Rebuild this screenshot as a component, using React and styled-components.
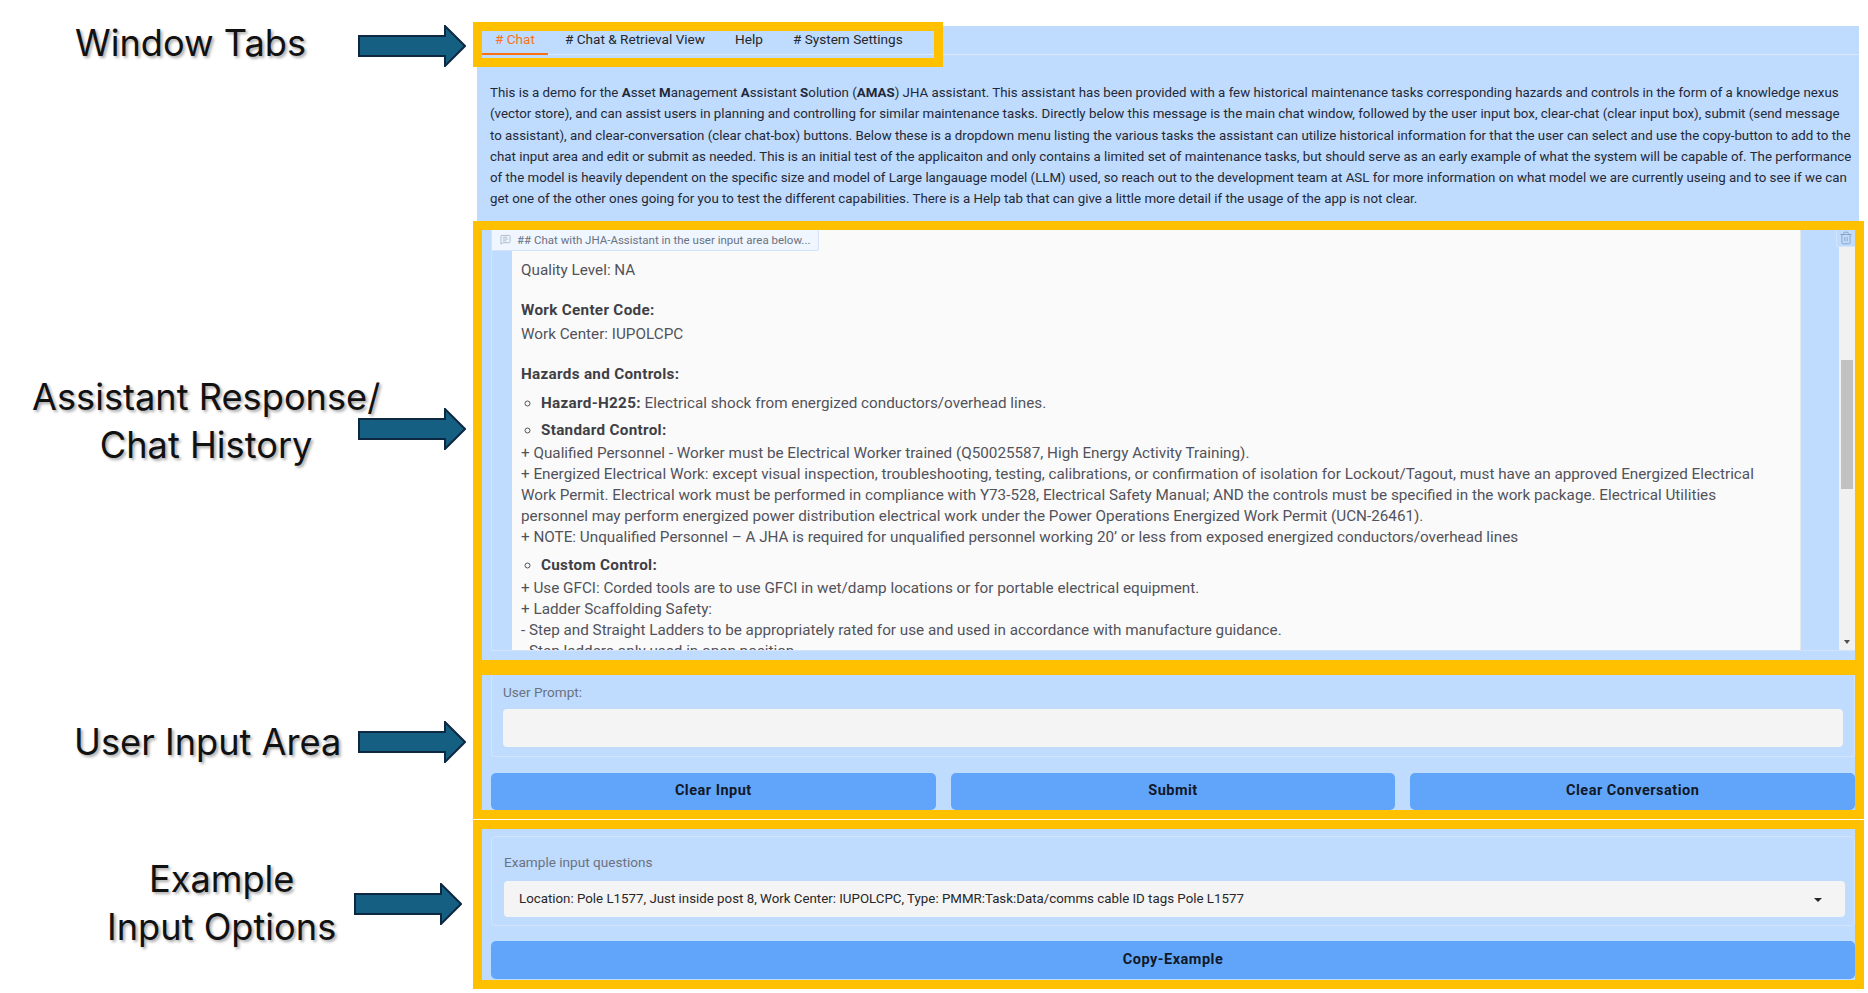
import { MessageSquareText, Trash2 } from "lucide-react";
import styled, { createGlobalStyle } from "styled-components";

const APP_FONT = `Roboto, "Noto Sans", sans-serif`;

const GlobalStyle = createGlobalStyle`
  html, body {
    margin: 0;
    background: #ffffff;
  }
  * {
    box-sizing: border-box;
  }
`;

const TABS = ["# Chat", "# Chat & Retrieval View", "Help", "# System Settings"];

const INTRO_LINES = [
  <>
    This is a demo for the <b>A</b>sset <b>M</b>anagement <b>A</b>ssistant <b>S</b>olution (<b>AMAS</b>) JHA assistant. This assistant has been provided with a few historical maintenance tasks corresponding hazards and controls in the form of a knowledge nexus
  </>,
  "(vector store), and can assist users in planning and controlling for similar maintenance tasks. Directly below this message is the main chat window, followed by the user input box, clear-chat (clear input box), submit (send message",
  "to assistant), and clear-conversation (clear chat-box) buttons. Below these is a dropdown menu listing the various tasks the assistant can utilize historical information for that the user can select and use the copy-button to add to the",
  "chat input area and edit or submit as needed. This is an initial test of the applicaiton and only contains a limited set of maintenance tasks, but should serve as an early example of what the system will be capable of. The performance",
  "of the model is heavily dependent on the specific size and model of Large langauage model (LLM) used, so reach out to the development team at ASL for more information on what model we are currently useing and to see if we can",
  "get one of the other ones going for you to test the different capabilities. There is a Help tab that can give a little more detail if the usage of the app is not clear.",
];

const STANDARD_LINES = [
  "+ Qualified Personnel - Worker must be Electrical Worker trained (Q50025587, High Energy Activity Training).",
  "+ Energized Electrical Work: except visual inspection, troubleshooting, testing, calibrations, or confirmation of isolation for Lockout/Tagout, must have an approved Energized Electrical",
  "Work Permit. Electrical work must be performed in compliance with Y73-528, Electrical Safety Manual; AND the controls must be specified in the work package. Electrical Utilities",
  "personnel may perform energized power distribution electrical work under the Power Operations Energized Work Permit (UCN-26461).",
  "+ NOTE: Unqualified Personnel – A JHA is required for unqualified personnel working 20’ or less from exposed energized conductors/overhead lines",
];

const CUSTOM_LINES = [
  "+ Use GFCI: Corded tools are to use GFCI in wet/damp locations or for portable electrical equipment.",
  "+ Ladder Scaffolding Safety:",
  "- Step and Straight Ladders to be appropriately rated for use and used in accordance with manufacture guidance.",
  "- Step ladders only used in open position.",
];

const Annotation = ({ left, labelTop, arrowTop, arrowRight = 7, children }) => (
  <AnnotationRow $arrowRight={arrowRight}>
    <AnnotationLabel $left={left} $top={labelTop}>
      {children}
    </AnnotationLabel>
    <ArrowSvg $top={arrowTop} width="108" height="42" viewBox="0 0 108 42">
      <path
        d="M1 11 H87 V1 L107 21 L87 41 V31 H1 Z"
        fill="#156082"
        stroke="#0e2841"
        strokeWidth="2"
      />
    </ArrowSvg>
  </AnnotationRow>
);

const App = () => (
  <>
    <GlobalStyle />
    <Page>
      <Annotation left={75} labelTop={-3} arrowTop={3}>
        Window Tabs
      </Annotation>
      <IntroColumn>
        <Panel>
          <TabBar>
            {TABS.map((tab, i) => (
              <Tab key={tab} $active={i === 0}>
                {tab}
              </Tab>
            ))}
          </TabBar>
          <Intro>
            {INTRO_LINES.map((line, i) => (
              <IntroLine key={i}>{line}</IntroLine>
            ))}
          </Intro>
        </Panel>
        <TabsHighlight />
      </IntroColumn>

      <Annotation left={32} labelTop={152} arrowTop={187}>
        <CenteredLine>Assistant Response/</CenteredLine>
        <CenteredLine>Chat History</CenteredLine>
      </Annotation>
      <ChatSection>
        <ChatBlock>
          <ChatChip>
            <MessageSquareText size={11} strokeWidth={1.5} color="#94a3b8" />
            ## Chat with JHA-Assistant in the user input area below...
          </ChatChip>
          <TrashChip>
            <Trash2 size={14} strokeWidth={1.25} color="#7f93ad" />
          </TrashChip>
          <Bubble>
            <Para>Quality Level: NA</Para>
            <Para>
              <b>Work Center Code:</b>
              <br />
              Work Center: IUPOLCPC
            </Para>
            <Para>
              <b>Hazards and Controls:</b>
            </Para>
            <BulletList>
              <li>
                <b>Hazard-H225:</b> Electrical shock from energized conductors/overhead lines.
              </li>
            </BulletList>
            <BulletList>
              <li>
                <b>Standard Control:</b>
              </li>
            </BulletList>
            <LineGroup>
              {STANDARD_LINES.map((line) => (
                <div key={line}>{line}</div>
              ))}
            </LineGroup>
            <BulletList>
              <li>
                <b>Custom Control:</b>
              </li>
            </BulletList>
            <LineGroup>
              {CUSTOM_LINES.map((line) => (
                <div key={line}>{line}</div>
              ))}
            </LineGroup>
          </Bubble>
          <ScrollTrack>
            <ScrollThumb />
            <ScrollArrow />
          </ScrollTrack>
        </ChatBlock>
      </ChatSection>

      <Annotation left={74} labelTop={52} arrowTop={55}>
        User Input Area
      </Annotation>
      <InputSection>
        <PromptBox>
          <FieldLabel>User Prompt:</FieldLabel>
          <PromptInput />
        </PromptBox>
        <ButtonRow>
          <ActionButton>Clear Input</ActionButton>
          <ActionButton>Submit</ActionButton>
          <ActionButton>Clear Conversation</ActionButton>
        </ButtonRow>
      </InputSection>

      <Annotation left={107} labelTop={36} arrowTop={64} arrowRight={11}>
        <CenteredLine>Example</CenteredLine>
        <CenteredLine>Input Options</CenteredLine>
      </Annotation>
      <ExampleSection>
        <ExampleBox>
          <FieldLabel>Example input questions</FieldLabel>
          <SelectBox>
            Location: Pole L1577, Just inside post 8, Work Center: IUPOLCPC, Type: PMMR:Task:Data/comms cable ID tags Pole L1577
            <SelectCaret />
          </SelectBox>
        </ExampleBox>
        <CopyButton>Copy-Example</CopyButton>
      </ExampleSection>
    </Page>
  </>
);

const Page = styled.div`
  display: grid;
  grid-template-columns: 473px 1391px;
  grid-template-rows: 199px 445px 153px 170px;
  width: 1868px;
  height: 993px;
  padding-top: 22px;
  overflow: hidden;
  font-family: ${APP_FONT};
`;

const AnnotationRow = styled.div`
  display: flex;
  align-items: flex-start;
  justify-content: space-between;
  padding-right: ${({ $arrowRight }) => $arrowRight}px;
`;

const AnnotationLabel = styled.div`
  flex: none;
  margin-top: ${({ $top }) => $top}px;
  margin-left: ${({ $left }) => $left}px;
  margin-right: -120px;
  font-family: Inter, Roboto, sans-serif;
  font-size: 36.2px;
  line-height: 48px;
  color: #111111;
  text-shadow: 2px 2px 3px rgba(0, 0, 0, 0.35);
  white-space: nowrap;
`;

const CenteredLine = styled.div`
  text-align: center;
`;

const ArrowSvg = styled.svg`
  display: block;
  flex: none;
  margin-top: ${({ $top }) => $top}px;
`;

const IntroColumn = styled.div`
  position: relative;
  padding: 4px 5px 0 4px;
`;

const Panel = styled.div`
  height: 195px;
  background: #bfdbfe;
`;

const TabBar = styled.div`
  display: flex;
  gap: 4px;
  height: 29px;
  padding-left: 5px;
  border-bottom: 1px solid #dbe8fb;
`;

const Tab = styled.div`
  height: 29px;
  padding: 0 13px;
  font-size: 13.6px;
  line-height: 27px;
  color: ${({ $active }) => ($active ? "#f97316" : "#27272a")};
  border-bottom: ${({ $active }) => ($active ? "2px solid #f97316" : "none")};
`;

const Intro = styled.div`
  padding: 27px 0 0 13px;
  font-size: 13.3px;
  line-height: 21.3px;
  color: #1f2937;
`;

const IntroLine = styled.div`
  white-space: nowrap;
  b {
    font-weight: 700;
  }
`;

const TabsHighlight = styled.div`
  position: absolute;
  top: 0;
  left: 0;
  width: 470px;
  height: 45px;
  border: 9px solid #ffc000;
  pointer-events: none;
`;

const ChatSection = styled.section`
  border: 9px solid #ffc000;
  border-bottom-width: 6px;
  background: #bfdbfe;
  padding: 0 0 9px 9px;
`;

const ChatBlock = styled.div`
  position: relative;
  display: flex;
  justify-content: space-between;
  height: 421px;
  padding-left: 20px;
  border-left: 1px solid #d3e3fa;
  border-bottom: 1px solid #d3e3fa;
`;

const ChatChip = styled.div`
  position: absolute;
  top: 0;
  left: 0;
  display: flex;
  align-items: center;
  gap: 6px;
  height: 21px;
  width: 327px;
  padding: 0 0 1px 8px;
  font-size: 11.5px;
  color: #6b7280;
  background: #eff6ff;
  border-right: 1px solid #d3e3fa;
  border-bottom: 1px solid #d3e3fa;
  border-radius: 0 0 3px 0;
`;

const TrashChip = styled.div`
  position: absolute;
  top: 0;
  right: 0;
  display: flex;
  align-items: center;
  justify-content: center;
  width: 19px;
  height: 17px;
  background: #bfdbfe;
  border-left: 1px solid #d3e3fa;
  border-bottom: 1px solid #d3e3fa;
`;

const Bubble = styled.div`
  width: 1289px;
  height: 100%;
  padding: 28px 0 0 9px;
  overflow: hidden;
  font-size: 15.25px;
  line-height: 21px;
  color: #52525b;
  background: #fafafa;
  border-right: 1px solid #e5e7eb;

  b {
    font-weight: 700;
    letter-spacing: 0.3px;
    color: #3f3f46;
  }
`;

const Para = styled.div`
  margin-bottom: 16px;
  line-height: 24px;
  &:nth-of-type(3) {
    margin-bottom: 7px;
  }
`;

const BulletList = styled.ul`
  margin: 0 0 6px;
  padding-left: 20px;
  list-style: circle;
`;

const LineGroup = styled.div`
  margin: -4px 0 7px;
  white-space: nowrap;
`;

const ScrollTrack = styled.div`
  display: flex;
  flex-direction: column;
  align-items: center;
  width: 16px;
  background: #f1f1f1;
`;

const ScrollThumb = styled.div`
  width: 12px;
  height: 129px;
  margin-top: 130px;
  background: #c1c1c1;
`;

const ScrollArrow = styled.div`
  margin-top: auto;
  margin-bottom: 6px;
  border-left: 3.5px solid transparent;
  border-right: 3.5px solid transparent;
  border-top: 4px solid #505050;
`;

const InputSection = styled.section`
  border: 9px solid #ffc000;
  background: #bfdbfe;
  padding-left: 9px;
`;

const PromptBox = styled.div`
  height: 82px;
  padding: 7px 11px 0;
  border: 1.5px solid #d3e3fa;
  border-top: none;
  border-radius: 0 0 3px 3px;
`;

const FieldLabel = styled.div`
  height: 20px;
  font-size: 13.6px;
  line-height: 20px;
  color: #6b7280;
`;

const PromptInput = styled.div`
  height: 38px;
  margin-top: 7px;
  background: #f4f4f5;
  border-radius: 4px;
`;

const ButtonRow = styled.div`
  display: grid;
  grid-template-columns: repeat(3, 1fr);
  gap: 15px;
  margin-top: 16px;
`;

const ActionButton = styled.div`
  height: 37px;
  font-size: 14.5px;
  font-weight: 700;
  letter-spacing: 0.5px;
  line-height: 36px;
  text-align: center;
  color: #111827;
  background: #60a5fa;
  border-radius: 5px;
`;

const ExampleSection = styled.section`
  margin-top: 1px;
  border: 9px solid #ffc000;
  background: #bfdbfe;
  padding: 7px 0 0 9px;
`;

const ExampleBox = styled.div`
  height: 90px;
  padding: 15px 9px 0 12px;
  border: 1.5px solid #d3e3fa;
  border-radius: 4px;
`;

const SelectBox = styled.div`
  position: relative;
  height: 36px;
  margin-top: 9px;
  padding-left: 15px;
  font-size: 13.3px;
  line-height: 35px;
  color: #27272a;
  background: #f4f4f5;
  border-radius: 4px;
`;

const SelectCaret = styled.span`
  position: absolute;
  top: 17px;
  right: 23px;
  border-left: 4px solid transparent;
  border-right: 4px solid transparent;
  border-top: 4px solid #27272a;
`;

const CopyButton = styled(ActionButton)`
  height: 38px;
  margin-top: 15px;
  line-height: 37px;
`;

export default App;
